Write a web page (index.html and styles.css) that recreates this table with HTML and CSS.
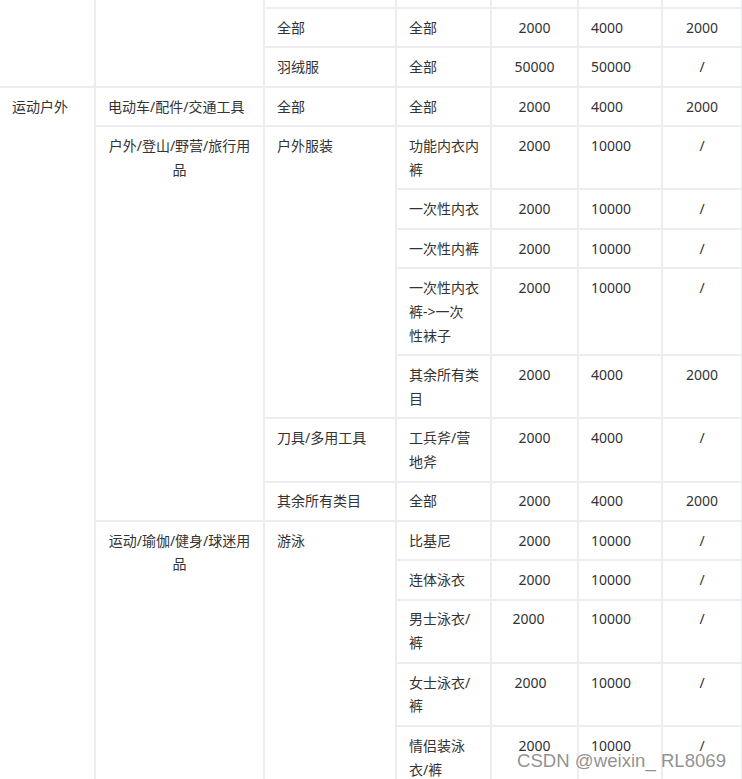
FILE: index.html
```html
<!DOCTYPE html>
<html lang="zh-CN">
<head>
<meta charset="utf-8">
<title>类目保证金表</title>
<link rel="stylesheet" href="styles.css">
</head>
<body>
<div class="page">
<table class="grid">
<colgroup>
<col class="w1"><col class="w2"><col class="w3"><col class="w4"><col class="w5"><col class="w6"><col class="w7">
</colgroup>
<tbody>
<tr><td rowspan="3"></td><td rowspan="3"></td><td>&nbsp;</td><td>&nbsp;</td><td class="n">&nbsp;</td><td>&nbsp;</td><td class="n">&nbsp;</td></tr>
<tr><td>全部</td><td>全部</td><td class="n">2000</td><td>4000</td><td class="n">2000</td></tr>
<tr><td>羽绒服</td><td>全部</td><td class="n">50000</td><td>50000</td><td class="n">/</td></tr>
<tr><td rowspan="13">运动户外</td><td>电动车/配件/交通工具</td><td>全部</td><td>全部</td><td class="n">2000</td><td>4000</td><td class="n">2000</td></tr>
<tr><td rowspan="7" class="mid">户外/登山/野营/旅行用品</td><td rowspan="5">户外服装</td><td>功能内衣内裤</td><td class="n">2000</td><td>10000</td><td class="n">/</td></tr>
<tr><td>一次性内衣</td><td class="n">2000</td><td>10000</td><td class="n">/</td></tr>
<tr><td>一次性内裤</td><td class="n">2000</td><td>10000</td><td class="n">/</td></tr>
<tr><td>一次性内衣裤-&gt;一次<br>性袜子</td><td class="n">2000</td><td>10000</td><td class="n">/</td></tr>
<tr><td>其余所有类目</td><td class="n">2000</td><td>4000</td><td class="n">2000</td></tr>
<tr><td>刀具/多用工具</td><td>工兵斧/营地斧</td><td class="n">2000</td><td>4000</td><td class="n">/</td></tr>
<tr><td>其余所有类目</td><td>全部</td><td class="n">2000</td><td>4000</td><td class="n">2000</td></tr>
<tr><td rowspan="5" class="mid">运动/瑜伽/健身/球迷用品</td><td rowspan="5">游泳</td><td>比基尼</td><td class="n">2000</td><td>10000</td><td class="n">/</td></tr>
<tr><td>连体泳衣</td><td class="n">2000</td><td>10000</td><td class="n">/</td></tr>
<tr><td>男士泳衣/裤</td><td class="n s6">2000</td><td>10000</td><td class="n">/</td></tr>
<tr><td>女士泳衣/裤</td><td class="n s4">2000</td><td>10000</td><td class="n">/</td></tr>
<tr><td>情侣装泳衣/裤</td><td class="n">2000</td><td>10000</td><td class="n">/</td></tr>
</tbody>
</table>
<div class="wm">CSDN @weixin_ RL8069</div>
</div>
</body>
</html>
```

FILE: styles.css
```css
html, body {
  margin: 0;
  padding: 0;
  background: #ffffff;
}

body {
  font-family: "Noto Sans", "Noto Sans CJK SC", sans-serif;
  font-size: 14px;
  color: #333333;
}

.page {
  position: relative;
  width: 742px;
  height: 779px;
  overflow: hidden;
}

.grid {
  border-collapse: collapse;
  table-layout: fixed;
  width: 745px;
  margin: -32.4px 0 0 -2px;
}

.w1 { width: 96px; }
.w2 { width: 169px; }
.w3 { width: 132px; }
.w4 { width: 95px; }
.w5 { width: 87px; }
.w6 { width: 84px; }
.w7 { width: 80px; }

.grid td {
  border: 2px solid #ebedf0;
  padding: 6.8px 10px 6.8px 12px;
  line-height: 23.8px;
  vertical-align: top;
  text-align: left;
  word-break: normal;
}

.grid td.mid {
  text-align: center;
  padding-right: 12px;
}

.grid td.n {
  text-align: center;
  padding-right: 12px;
}

.grid td.s6 { padding-right: 24px; }
.grid td.s4 { padding-right: 20px; }

.wm {
  position: absolute;
  left: 517px;
  top: 751px;
  font-family: "Liberation Sans", sans-serif;
  font-size: 18.6px;
  line-height: 19px;
  color: rgba(125, 125, 125, 0.85);
  white-space: nowrap;
}
```
